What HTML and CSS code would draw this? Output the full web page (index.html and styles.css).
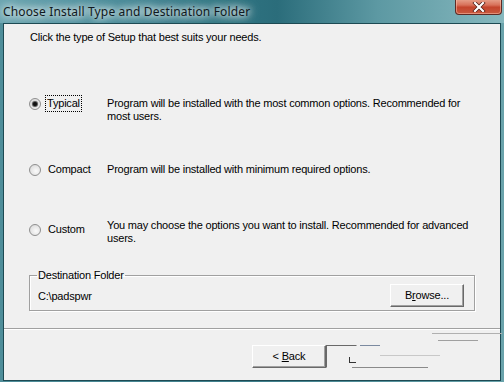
FILE: index.html
```html
<!DOCTYPE html>
<html lang="en">
  <head>
    <meta charset="UTF-8" />
    <title>Choose Install Type and Destination Folder</title>
    <link rel="stylesheet" href="styles.css">
  </head>
  <body>
    <div class="window">
      <div class="titlebar">
        <span class="title">Choose Install Type and Destination Folder</span>
        <span class="close-btn">
          <svg width="14" height="10" viewBox="0 0 14 10">
            <path d="M3 1 L11 9 M11 1 L3 9" stroke="#4a1a14" stroke-width="3.6" stroke-linecap="square" />
            <path d="M3 1 L11 9 M11 1 L3 9" stroke="#fff" stroke-width="2.2" stroke-linecap="square" />
          </svg>
        </span>
      </div>
      <div class="client">
        <p class="intro">Click the type of Setup that best suits your needs.</p>

        <div class="options">
          <div class="option opt-typical">
            <span class="choice">
              <span class="radio checked"></span>
              <span class="label focused">Typical</span>
            </span>
            <span class="desc">Program will be installed with the most common options. Recommended for<br>most users.</span>
          </div>
          <div class="option opt-compact">
            <span class="choice">
              <span class="radio"></span>
              <span class="label">Compact</span>
            </span>
            <span class="desc">Program will be installed with minimum required options.</span>
          </div>
          <div class="option opt-custom">
            <span class="choice">
              <span class="radio"></span>
              <span class="label">Custom</span>
            </span>
            <span class="desc">You may choose the options you want to install. Recommended for advanced<br>users.</span>
          </div>
        </div>

        <fieldset class="dest">
          <legend>Destination Folder</legend>
          <div class="dest-row">
            <span class="path">C:\padspwr</span>
            <span class="btn browse">B<u>r</u>owse...</span>
          </div>
        </fieldset>

        <div class="separator"></div>

        <div class="footer">
          <span class="btn back">&lt; <u>B</u>ack</span>
          <span class="btn next"><span class="next-mark"></span></span>
          <span class="glitch g1"></span>
          <span class="glitch g2"></span>
          <span class="glitch g3"></span>
          <span class="glitch g4"></span>
          <span class="glitch g5"></span>
        </div>
      </div>
    </div>
  </body>
</html>
```

FILE: styles.css
```css
html, body {
  margin: 0;
  padding: 0;
  width: 504px;
  height: 382px;
  overflow: hidden;
}
body {
  background: linear-gradient(90deg, #4f8e9a 0%, #3f7f8c 50%, #6aa3ab 100%);
  font-family: "Liberation Sans", Arial, sans-serif;
  font-size: 11px;
  letter-spacing: -0.2px;
  color: #000;
}
.window {
  display: flex;
  flex-direction: column;
  height: 382px;
}
.titlebar {
  height: 23px;
  position: relative;
  background: linear-gradient(90deg, #6ba5b1 0%, #4d8f9c 20%, #2f7482 45%, #2b6d7b 55%, #5d99a3 75%, #86b8be 100%);
  flex-shrink: 0;
}
.title {
  display: inline-block;
  padding: 3px 0 0 3px;
  font-family: "Noto Sans", "DejaVu Sans", sans-serif;
  font-size: 12px;
  letter-spacing: 0.15px;
  color: #101820;
  text-shadow: 0 0 6px #fff, 0 0 10px #fff, 0 0 14px #e8f3f5;
}
.close-btn {
  position: absolute;
  top: -1px;
  left: 455px;
  width: 45px;
  height: 15px;
  border: 1px solid #5e2a24;
  border-top: none;
  border-radius: 0 0 4px 4px;
  background: linear-gradient(180deg, #e8a48f 0%, #d8715a 40%, #c4442c 55%, #c85a40 100%);
  box-shadow: inset 0 0 0 1px rgba(255, 200, 180, 0.5);
  display: flex;
  align-items: center;
  justify-content: center;
}
.client {
  flex: 1;
  margin: 0 3px 1px 3px;
  border: 1px solid #1d4a53;
  background: #f0f0f0;
  display: flex;
  flex-direction: column;
  position: relative;
}
.intro {
  margin: 7px 0 0 26px;
  line-height: 13px;
}
.options {
  display: flex;
  flex-direction: column;
  padding-left: 25px;
}
.option {
  display: grid;
  grid-template-columns: 78px 1fr;
  line-height: 13px;
}
.opt-typical { margin-top: 53px; }
.opt-compact { margin-top: 40px; }
.opt-custom { margin-top: 47px; }
.opt-custom .desc { margin-top: -4px; }
.choice {
  display: flex;
  align-items: center;
  height: 13px;
}
.radio {
  box-sizing: border-box;
  width: 12px;
  height: 12px;
  border-radius: 50%;
  border: 1px solid #8f8f8f;
  background: radial-gradient(circle at 60% 60%, #fbfbfb 0%, #e4e4e4 60%, #cfcfcf 100%);
  display: flex;
  align-items: center;
  justify-content: center;
  margin-right: 6px;
  flex-shrink: 0;
}
.radio.checked::after {
  content: "";
  width: 4px;
  height: 4px;
  border-radius: 50%;
  background: #111;
  box-shadow: 0 0 1px 1px #444;
}
.label {
  padding: 1px 1px;
}
.label.focused {
  outline: 1px dotted #000;
  outline-offset: 0;
  margin-left: -1px;
}
.dest {
  margin: 24px 25px 0 25px;
  padding: 4px 10px 3px 8px;
  border: 1px solid #a0a0a0;
  box-shadow: 1px 1px 0 #fff, inset 1px 1px 0 #fff;
  min-width: 0;
}
.dest legend {
  padding: 0 1px;
  margin-left: -1px;
  line-height: 13px;
}
.dest-row {
  display: flex;
  justify-content: space-between;
  align-items: center;
  margin-top: -2px;
}
.btn {
  box-sizing: border-box;
  display: block;
  width: 74px;
  height: 23px;
  line-height: 21px;
  text-align: center;
  background: #f0f0f0;
  border: 1px solid;
  border-color: #fff #696969 #696969 #fff;
  box-shadow: inset -1px -1px 0 #a0a0a0;
}
.separator {
  margin-top: 17px;
  height: 1px;
  background: #a0a0a0;
  border-bottom: 1px solid #fff;
}
.footer {
  display: flex;
  padding: 15px 0 0 248px;
  position: relative;
}
.btn.next {
  border-color: #696969 transparent transparent #696969;
  box-shadow: none;
  background: transparent;
  width: 31px;
  padding: 11px 0 0 22px;
}
.next-mark {
  display: block;
  width: 6px;
  height: 5px;
  border-left: 1px solid #333;
  border-bottom: 1px solid #333;
}
.glitch {
  position: absolute;
  height: 1px;
  background: #8a8a8a;
}
.g1 { left: 348px; top: 37px; width: 76px; }
.g2 { left: 356px; top: 15px; width: 20px; background: #7b8aa0; }
.g3 { left: 428px; top: 3px; width: 70px; background: #b0b0b0; }
.g4 { left: 376px; top: 25px; width: 60px; background: #c8c8c8; }
.g5 { left: 434px; top: 10px; width: 40px; background: #a0a0a0; }
```
